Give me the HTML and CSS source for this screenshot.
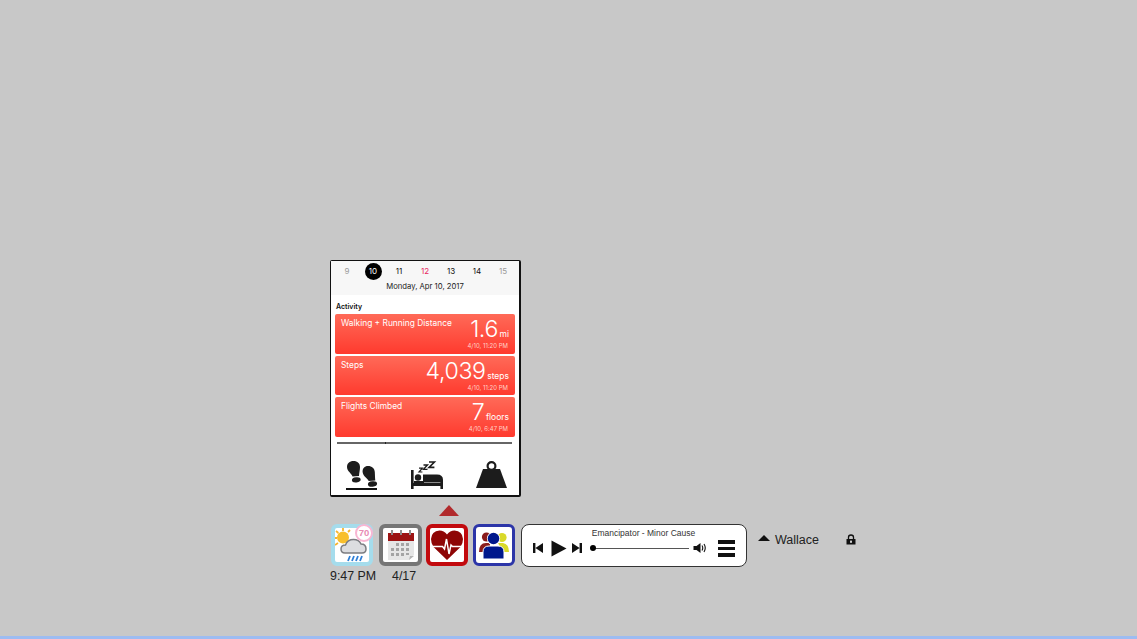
FILE: index.html
```html
<!DOCTYPE html>
<html lang="en">
<head>
<meta charset="utf-8">
<title>Health dock</title>
<link rel="stylesheet" href="styles.css">
</head>
<body>
<main class="desk">
  <section class="popup">
    <header class="cal">
      <div class="days">
        <span class="day muted">9</span>
        <span class="day today">10</span>
        <span class="day">11</span>
        <span class="day pink">12</span>
        <span class="day">13</span>
        <span class="day">14</span>
        <span class="day muted">15</span>
      </div>
      <div class="date">Monday, Apr 10, 2017</div>
    </header>
    <div class="section-title">Activity</div>
    <div class="cards">
      <article class="card">
        <div class="card-name">Walking + Running Distance</div>
        <div class="card-side">
          <div class="card-val"><span class="num">1.6</span><span class="unit">mi</span></div>
          <div class="card-time">4/10, 11:20 PM</div>
        </div>
      </article>
      <article class="card">
        <div class="card-name">Steps</div>
        <div class="card-side">
          <div class="card-val"><span class="num">4,039</span><span class="unit">steps</span></div>
          <div class="card-time">4/10, 11:20 PM</div>
        </div>
      </article>
      <article class="card">
        <div class="card-name">Flights Climbed</div>
        <div class="card-side">
          <div class="card-val"><span class="num">7</span><span class="unit">floors</span></div>
          <div class="card-time">4/10, 6:47 PM</div>
        </div>
      </article>
    </div>
    <div class="divider"></div>
    <nav class="tabs">
      <div class="tab selected">
        <svg width="32" height="26" viewBox="0 0 32 26">
          <g fill="#1c1c1c">
            <path d="M7.5 0 C11.5 0 14 2.5 14 6 C14 9 13.2 12 13 15 L6.5 15.6 C6 12.5 1 10.5 1 6 C1 2.5 3.5 0 7.5 0 Z"/>
            <ellipse cx="10.3" cy="18.8" rx="4.4" ry="2.6" transform="rotate(-6 10.3 18.8)"/>
            <path d="M22 5 C26 5 28.6 7.5 28.8 11 C29 14 29 17 29.3 19.4 L22.6 20 C22 17.5 17 15.5 16.6 11 C16.4 7.5 18.5 5 22 5 Z"/>
            <ellipse cx="26.5" cy="23" rx="4.6" ry="2.7" transform="rotate(-6 26.5 23)"/>
          </g>
        </svg>
      </div>
      <div class="tab">
        <svg width="32" height="28" viewBox="0 0 32 28">
          <g fill="#1c1c1c">
            <rect x="0" y="9" width="2.6" height="19"/>
            <rect x="29.4" y="20" width="2.6" height="8"/>
            <rect x="0" y="22" width="32" height="3"/>
            <circle cx="7" cy="16.5" r="3.2"/>
            <path d="M12 13.5 H26 Q32 13.5 32 19 V21.5 H12 Z"/>
            <rect x="3" y="20" width="10" height="2"/>
          </g>
          <g fill="none" stroke="#1c1c1c">
            <path d="M8 7.2 H11.4 L8 11 H11.4" stroke-width="1.2"/>
            <path d="M12.5 4 H16.5 L12.5 8.4 H16.5" stroke-width="1.4"/>
            <path d="M18 1 H23.4 L18 6.4 H23.4" stroke-width="1.6"/>
          </g>
        </svg>
      </div>
      <div class="tab">
        <svg width="31" height="27" viewBox="0 0 31 27">
          <circle cx="15.5" cy="5" r="3.9" fill="none" stroke="#1c1c1c" stroke-width="2.2"/>
          <path d="M7 8 H24 L31 27 H0 Z" fill="#1c1c1c"/>
        </svg>
      </div>
    </nav>
  </section>

  <div class="pointer"></div>

  <section class="dock">
    <div class="apps">
      <div class="app-row">
        <div class="app app-weather">
          <svg width="34" height="34" viewBox="0 0 34 34">
            <g stroke="#f6b52e" stroke-width="1.8">
              <path d="M8 0 V3 M1 3 L3.4 5 M-1 10 H2 M0 17 L3 15 M15 2 L13 4"/>
            </g>
            <circle cx="8" cy="9.5" r="6" fill="#f8bf2c"/>
            <path d="M10 25 Q6 25 6 21 Q6 17 10.5 17 Q12.5 11.5 18.5 11.5 Q24 11.5 26 16 Q31 16 31 21 Q31 25 27 25 Z" fill="#dcdde0" stroke="#7b7c80" stroke-width="1.5"/>
            <g stroke="#2f7fd6" stroke-width="1.8">
              <path d="M13 33 L15 28 M17 33 L19 28 M21 33 L23 28 M25 33 L27 28"/>
            </g>
          </svg>
          <span class="temp">70</span>
        </div>
        <div class="app app-cal">
          <svg width="26" height="30" viewBox="0 0 26 30">
            <path d="M0 3 H26 V11 H0 Z" fill="#9c1414"/>
            <path d="M0 11 H26 V25 L21 30 H0 Z" fill="#e6e6e6"/>
            <path d="M21 30 L22 26 H26 Z" fill="#b5b5b5"/>
            <g fill="#8f8f8f"><rect x="3" y="0" width="2" height="5"/><rect x="12" y="0" width="2" height="5"/><rect x="21" y="0" width="2" height="5"/></g>
            <g fill="#a4a4a4">
              <rect x="8" y="13" width="3" height="3"/><rect x="13" y="13" width="3" height="3"/><rect x="18" y="13" width="3" height="3"/>
              <rect x="3" y="18" width="3" height="3"/><rect x="8" y="18" width="3" height="3"/><rect x="13" y="18" width="3" height="3"/><rect x="18" y="18" width="3" height="3"/>
              <rect x="3" y="23" width="3" height="3"/><rect x="8" y="23" width="3" height="3"/><rect x="13" y="23" width="3" height="3"/><rect x="18" y="23" width="3" height="2"/>
            </g>
          </svg>
        </div>
        <div class="app app-heart">
          <svg width="32" height="30" viewBox="0 0 32 30">
            <path d="M16 30 L2.5 17 Q0 13.5 0 9 Q0.5 1 8.5 0.5 Q13 0.5 16 4.5 Q19 0.5 23.5 0.5 Q31.5 1 32 9 Q32 13.5 29.5 17 Z" fill="#8e0606"/>
            <path d="M0 16.5 H11.5 L13.5 19 L15.5 9 L18 24 L20 15 L21.5 16.5 H32" fill="none" stroke="#fff" stroke-width="1.5"/>
          </svg>
        </div>
        <div class="app app-people">
          <svg width="30" height="27" viewBox="0 0 30 27">
            <circle cx="7.5" cy="5" r="4.6" fill="#8a1b1b"/>
            <path d="M0 20 Q0 11 7 11 H11 V20 Z" fill="#8a1b1b"/>
            <circle cx="23" cy="5.5" r="4.6" fill="#d9d92a"/>
            <path d="M19 11 H24 Q30 12 30 20 H24 Z" fill="#d9d92a"/>
            <circle cx="14.5" cy="6.5" r="6.6" fill="#fff"/>
            <circle cx="14.5" cy="6.5" r="5.8" fill="#00188c"/>
            <path d="M4 27 V20 Q4 14 10 14 H19 Q25 14 25 20 V27 Z" fill="#00188c" stroke="#fff" stroke-width="1"/>
          </svg>
        </div>
      </div>
      <div class="labels">
        <span class="clock">9:47 PM</span>
        <span class="short-date">4/17</span>
      </div>
    </div>

    <div class="player">
      <div class="track">Emancipator - Minor Cause</div>
      <div class="controls">
        <svg width="10" height="12" viewBox="0 0 10 12"><path d="M0 1 H2.4 V11 H0 Z M10 1 V11 L2.4 6 Z" fill="#111"/></svg>
        <svg class="ctl-play" width="16" height="17" viewBox="0 0 16 17"><path d="M0.5 0.5 L15.5 8.5 L0.5 16.5 Z" fill="#111"/></svg>
        <svg class="ctl-next" width="10" height="12" viewBox="0 0 10 12"><path d="M0 1 L7.6 6 L0 11 Z M7.6 1 H10 V11 H7.6 Z" fill="#111"/></svg>
        <div class="slider"><span class="knob"></span></div>
        <svg class="ctl-vol" width="14" height="12" viewBox="0 0 14 12">
          <path d="M0.5 4 H3.5 L7.5 1 V11 L3.5 8 H0.5 Z" fill="#111"/>
          <path d="M9 3.5 Q10.5 6 9 8.5 M11 2 Q13.5 6 11 10" fill="none" stroke="#111" stroke-width="1.1"/>
        </svg>
        <div class="menu"><span></span><span></span><span></span></div>
      </div>
    </div>

    <div class="user">
      <span class="caret"></span>
      <span class="name">Wallace</span>
      <svg class="lock" width="10" height="11" viewBox="0 0 10 11">
        <path d="M2.5 5 V3.2 Q2.5 1 5 1 Q7.5 1 7.5 3.2 V5" fill="none" stroke="#111" stroke-width="1.3"/>
        <path d="M0.5 5 H9.5 V10.5 H0.5 Z" fill="#111"/>
        <rect x="4.2" y="6.6" width="1.6" height="2.2" fill="#fff"/>
      </svg>
    </div>
  </section>
</main>
</body>
</html>
```

FILE: styles.css
```css
* { box-sizing: border-box; }
html, body { margin: 0; height: 100%; }
body {
  width: 1137px;
  height: 639px;
  overflow: hidden;
  background: #c8c8c8;
  font-family: "Liberation Sans", Arial, sans-serif;
  color: #111;
}
.desk {
  height: 639px;
  padding: 260px 0 0 330px;
  border-bottom: 3px solid #9dbcf2;
}

/* popup */
.popup {
  width: 191px;
  height: 237px;
  background: #fff;
  border: 1px solid #111;
  border-right-width: 2px;
  border-bottom-width: 2px;
  border-radius: 2px;
  display: flex;
  flex-direction: column;
  font-family: Inter, "Liberation Sans", sans-serif;
}
.cal { height: 34px; background: #f7f7f7; padding-top: 2px; }
.days { display: flex; padding-left: 3px; height: 17px; align-items: center; }
.day {
  width: 26px;
  height: 17px;
  line-height: 17px;
  text-align: center;
  font-size: 8px;
  color: #111;
}
.day.muted { color: #9a9a9a; }
.day.pink { color: #e8265e; }
.day.today {
  color: #fff;
  position: relative;
  z-index: 0;
}
.day.today::before {
  content: "";
  position: absolute;
  z-index: -1;
  left: 4.5px;
  top: 0;
  width: 17px;
  height: 17px;
  border-radius: 50%;
  background: #000;
}
.date {
  text-align: center;
  font-size: 7.7px;
  line-height: 11px;
  padding-top: 1px;
  color: #222;
}
.section-title {
  margin: 7px 0 0 5px;
  height: 11px;
  line-height: 10px;
  font-size: 7px;
  font-weight: 600;
  color: #111;
}
.cards {
  margin: 1px 4px 0;
  display: flex;
  flex-direction: column;
  gap: 2px;
}
.card {
  height: 39.5px;
  border-radius: 2px;
  background: linear-gradient(#ff6a58, #ff3a2e);
  color: #fff;
  display: flex;
  justify-content: space-between;
  padding: 4px 6px 0 6px;
}
.card-name {
  font-size: 8.4px;
  line-height: 10px;
  white-space: nowrap;
}
.card-side { display: flex; flex-direction: column; align-items: flex-end; }
.card-val {
  display: flex;
  align-items: baseline;
  gap: 1.5px;
  height: 24px;
  line-height: 23px;
  white-space: nowrap;
}
.num { font-size: 23.2px; font-weight: 300; letter-spacing: -0.4px; }
.unit { font-size: 8.5px; }
.card-time {
  margin-right: 1px;
  font-size: 6px;
  line-height: 7px;
  color: #ffd0c8;
}
.divider {
  position: relative;
  margin: 5.5px 7px 0 6px;
  height: 2px;
  background: #666;
  flex: none;
}
.divider::after {
  content: "";
  position: absolute;
  left: 48px;
  top: 0;
  width: 1px;
  height: 2px;
  background: #222;
}
.tabs {
  display: flex;
  gap: 33px;
  padding: 17px 0 0 15px;
  height: 46px;
}
.tab { flex: none; height: 28px; }
.tab.selected { position: relative; width: 32px; }
.tab.selected::after {
  content: "";
  position: absolute;
  left: 0;
  top: 27px;
  width: 31px;
  height: 2px;
  background: #111;
}

/* pointer */
.pointer {
  width: 0;
  height: 0;
  margin: 8px 0 0 109px;
  border-left: 10px solid transparent;
  border-right: 10px solid transparent;
  border-bottom: 11px solid #b12a2c;
}

/* dock */
.dock {
  margin-top: 8px;
  display: flex;
  align-items: flex-start;
}
.apps { width: 191px; }
.app-row { display: flex; gap: 5px; margin-left: 1px; }
.app {
  width: 42px;
  height: 42px;
  border-radius: 6px;
  background: #fff;
  display: flex;
  align-items: center;
  justify-content: center;
  position: relative;
  flex: none;
}
.app-weather { border: 4px solid #a5dcec; margin-right: 1px; }
.app-cal { border: 4px solid #767676; width: 43px; margin-right: -1px; }
.app-heart { border: 4px solid #c20a0e; }
.app-people { border: 3px solid #2c35a8; }
.temp {
  position: absolute;
  right: -4px;
  top: -4px;
  width: 18px;
  height: 18px;
  border-radius: 50%;
  background: #fff;
  border: 2.5px solid #f8b6d2;
  color: #e88bb4;
  font-size: 9.5px;
  line-height: 13px;
  text-align: center;
  font-weight: 700;
}
.labels {
  display: flex;
  font-size: 12.4px;
  line-height: 15px;
  margin-top: 3px;
  color: #222;
}
.clock { width: 62px; white-space: nowrap; }
.short-date { white-space: nowrap; }

.player {
  width: 226px;
  height: 43px;
  background: #fff;
  border: 1px solid #333;
  border-radius: 8px;
  padding-left: 11px;
}
.track {
  text-align: center;
  font-size: 8.5px;
  line-height: 10px;
  margin-top: 3px;
  padding-left: 8px;
  color: #333;
}
.controls { display: flex; align-items: center; margin-top: 1px; height: 18px; }
.ctl-play { margin-left: 8px; }
.ctl-next { margin-left: 5px; }
.slider {
  position: relative;
  width: 97px;
  height: 1px;
  background: #555;
  margin-left: 10px;
}
.knob {
  position: absolute;
  left: -2px;
  top: -3px;
  width: 6px;
  height: 6px;
  border-radius: 50%;
  background: #000;
}
.ctl-vol { margin-left: 4px; }
.menu {
  margin-left: 11px;
  display: flex;
  flex-direction: column;
  gap: 3px;
  width: 17px;
  padding-top: 1px;
}
.menu span { height: 3.5px; background: #111; display: block; }

.user {
  display: flex;
  align-items: center;
  height: 30px;
  margin-left: 11px;
}
.caret {
  width: 0;
  height: 0;
  border-left: 6.5px solid transparent;
  border-right: 6.5px solid transparent;
  border-bottom: 6px solid #111;
  margin-top: -2px;
}
.name { margin-left: 5px; font-size: 12.5px; color: #222; padding-top: 1px; }
.lock { margin-left: 27px; }
```
